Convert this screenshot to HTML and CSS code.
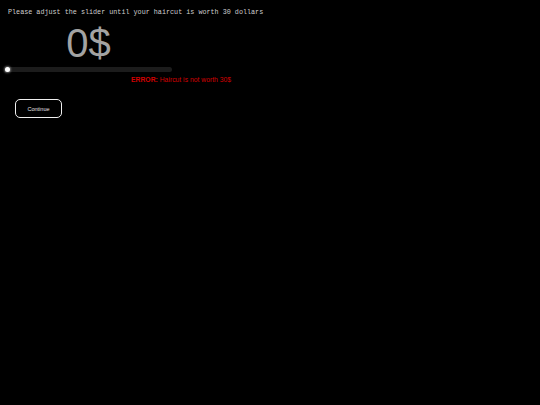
FILE: index.html
```html
<!DOCTYPE html>
<html lang="en">
<head>
  <meta charset="UTF-8" />
  <title>Haircut price</title>
  <link rel="stylesheet" href="styles.css">
</head>
<body>
  <p class="prompt">Please adjust the slider until your haircut is worth 30 dollars</p>

  <div class="price-box">
    <div class="price">0$</div>
    <input type="range" class="slider" min="0" max="100" value="0">
  </div>

  <p class="error"><b>ERROR:</b> Haircut is not worth 30$</p>

  <button class="continue">Continue</button>
</body>
</html>
```

FILE: styles.css
```css
body {
  background: #000;
  color: #ddd;
  margin: 0;
  font-family: 'Liberation Sans', Arial, sans-serif;
}

.prompt {
  font-family: 'Liberation Mono', 'Courier New', monospace;
  font-size: 6.75px;
  line-height: 8px;
  color: #cfcfcf;
  margin: 8px 0 0 8px;
}

.price-box {
  width: 167px;
  margin: 7px 0 0 5px;
}

.price {
  font-size: 40px;
  line-height: 40px;
  text-align: center;
  color: #a3a3a3;
}

.slider {
  -webkit-appearance: none;
  appearance: none;
  display: block;
  width: 100%;
  height: 5px;
  margin: 4px 0 0 0;
  background: #1c1c1c;
  border-radius: 3px;
  outline: none;
}

.slider::-webkit-slider-thumb {
  -webkit-appearance: none;
  width: 5px;
  height: 5px;
  border-radius: 50%;
  background: #fff;
  box-shadow: 0 0 2px 1px rgba(255, 255, 255, 0.4);
}

.error {
  font-size: 6.8px;
  line-height: 9px;
  color: #d40000;
  margin: 3px 0 0 131px;
}

.continue {
  display: block;
  margin: 15px 0 0 15px;
  width: 47px;
  height: 19px;
  padding: 0;
  background: #000;
  color: #e0e0e0;
  border: 1.5px solid #f0f0f0;
  border-radius: 5px;
  font-family: 'Liberation Sans', Arial, sans-serif;
  font-size: 5.5px;
  cursor: pointer;
}
```
